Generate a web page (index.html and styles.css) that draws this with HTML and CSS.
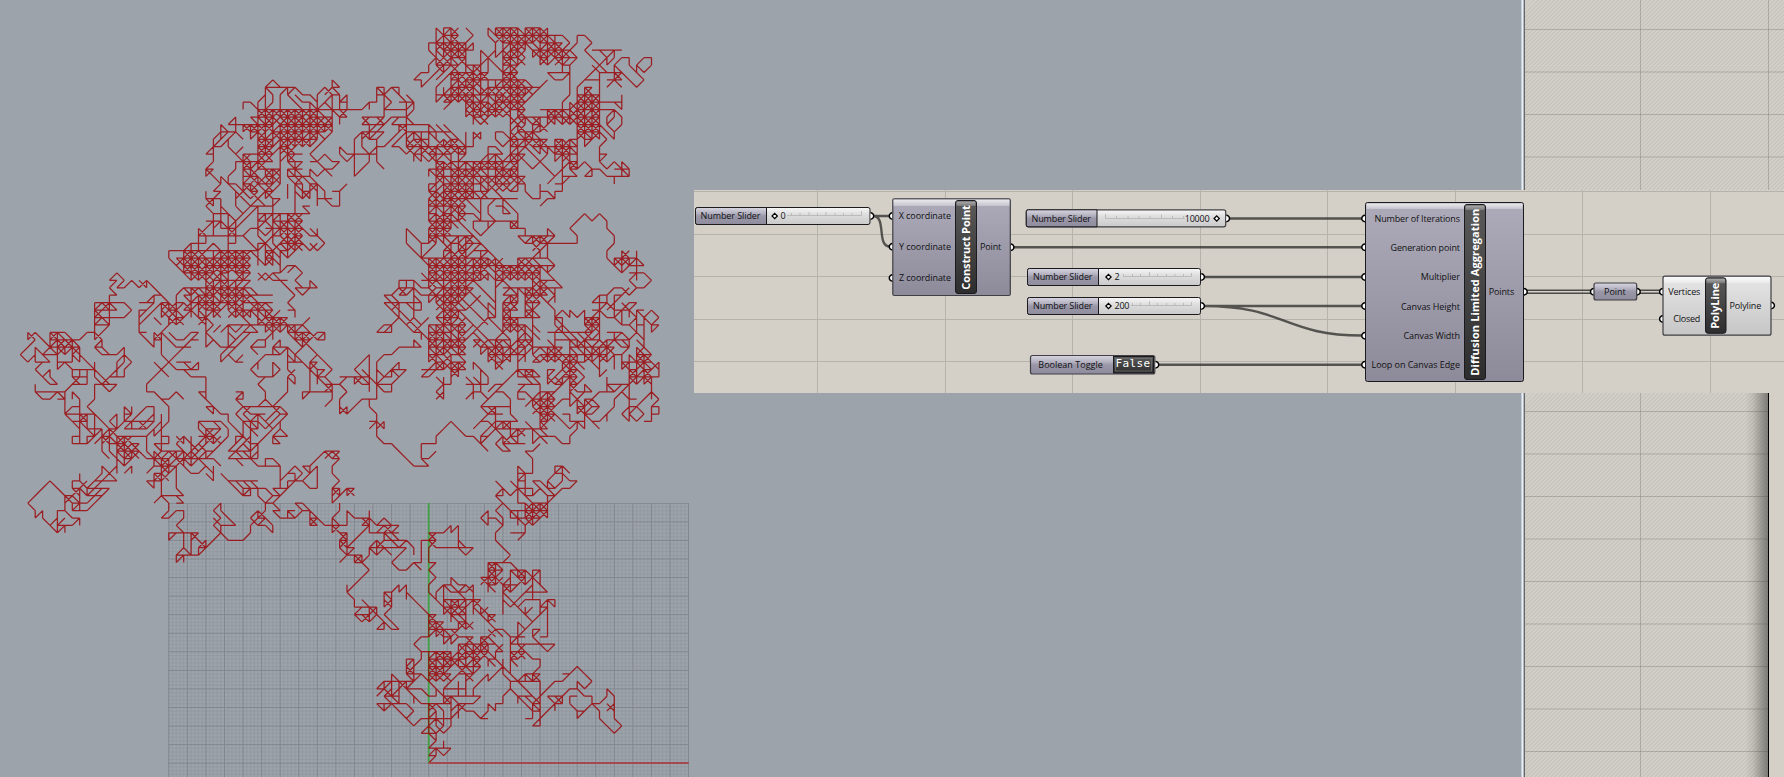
FILE: index.html
```html
<!DOCTYPE html>
<html lang="en">
<head>
<meta charset="utf-8">
<title>Diffusion Limited Aggregation</title>
<link rel="stylesheet" href="styles.css">
</head>
<body>
<main class="stage">
  <section class="viewport">
    <svg class="scene" width="700" height="777" viewBox="0 0 700 777">
      <defs>
        <clipPath id="plane"><rect x="168" y="503" width="521" height="274"/></clipPath>
      </defs>
      <g clip-path="url(#plane)">
        <path id="minor" class="grid-minor"/>
        <path id="major" class="grid-major"/>
      </g>
      <path class="axis-y" d="M428.7 503V763"/>
      <path id="walk" class="walk"/>
      <path class="axis-x" d="M428.7 763H688.7"/>
    </svg>
  </section>
  <div class="splitter"></div>
  <section class="side">
    <div class="side-top"></div>
    <div class="side-bottom"><div class="canvas-page"></div></div>
  </section>

  <svg class="definition" width="1090" height="203" viewBox="694 190 1090 203">
    <defs>
      <linearGradient id="purple" x1="0" y1="0" x2="0" y2="1"><stop offset="0" stop-color="#adabb9"/><stop offset="1" stop-color="#8d8a99"/></linearGradient>
      <linearGradient id="chip" x1="0" y1="0" x2="0" y2="1"><stop offset="0" stop-color="#d8d6e0"/><stop offset=".35" stop-color="#b3b1c0"/><stop offset=".5" stop-color="#9a97a8"/><stop offset="1" stop-color="#8f8c9d"/></linearGradient>
      <linearGradient id="track" x1="0" y1="0" x2="0" y2="1"><stop offset="0" stop-color="#f8f8f8"/><stop offset=".4" stop-color="#dedede"/><stop offset="1" stop-color="#cacaca"/></linearGradient>
      <linearGradient id="light" x1="0" y1="0" x2="0" y2="1"><stop offset="0" stop-color="#e6e6e6"/><stop offset="1" stop-color="#c6c6c6"/></linearGradient>
      <linearGradient id="dark" x1="0" y1="0" x2="0" y2="1"><stop offset="0" stop-color="#5a5a5a"/><stop offset="1" stop-color="#2d2d2d"/></linearGradient>
      <linearGradient id="gloss" x1="0" y1="0" x2="0" y2="1"><stop offset="0" stop-color="#fff" stop-opacity=".75"/><stop offset="1" stop-color="#fff" stop-opacity=".3"/></linearGradient>
      <g id="knob"><path d="M0-2.6L2.6 0 0 2.6-2.6 0Z"/></g>
      <g id="out"><path d="M0-3.2A3.2 3.2 0 0 1 0 3.2"/></g>
      <g id="in"><path d="M0-3.2A3.2 3.2 0 0 0 0 3.2"/></g>
    </defs>
    <rect class="sheet" x="694" y="190" width="1090" height="203"/>
    <path class="sheet-grid" d="M817.5 190V393M945.5 190V393M1072.5 190V393M1200.5 190V393M1327.5 190V393M1455.5 190V393M1582.5 190V393M1710.5 190V393M694 191.5H1784M694 234.5H1784M694 276.5H1784M694 319.5H1784M694 361.5H1784"/>

    <path class="wire" d="M873 216H890M873 216C887 216 876 246.500 890 246.500M1014 247.200H1362M1229 218.500H1362M1204 277H1362M1204 306H1362M1204 306C1285 306 1284 335.500 1362 335.500M1158 364.700H1362"/>
    <path class="wire-list" d="M1527 290.300H1591M1527 293.200H1591M1640 290.300H1660M1640 293.200H1660"/>

    <!-- Number Slider: 0 -->
    <g>
      <rect class="edge" x="695.500" y="207.500" width="174.500" height="17" rx="2" fill="url(#track)"/>
      <path class="edge" d="M766.500 207.500H697.500a2 2 0 0 0-2 2V222.500a2 2 0 0 0 2 2H766.500Z" fill="url(#chip)"/>
      <path class="ticks" d="M787 215.500H861.500V211M791.500 215.500v-2.500M800 215.500v-2.500M809 215.500v-3.500M817.500 215.500v-2.500M826 215.500v-3.500M835 215.500v-2.500M843.500 215.500v-2.500M852 215.500v-2.500"/>
      <text class="label" x="700.500" y="219" textLength="60">Number Slider</text>
      <use href="#knob" class="knob" x="774.700" y="216"/>
      <text class="label" x="780.500" y="219">0</text>
      <use href="#out" class="grip" x="870.500" y="216"/>
    </g>

    <!-- Construct Point -->
    <g>
      <use href="#in" class="grip" x="892.500" y="216"/><use href="#in" class="grip" x="892.500" y="246.700"/><use href="#in" class="grip" x="892.500" y="278"/>
      <use href="#out" class="grip" x="1010.700" y="247.200"/>
      <rect class="edge soft" x="892.800" y="198.800" width="117.500" height="96.700" rx="1.500" fill="url(#purple)"/>
      <rect x="893.500" y="199.500" width="116" height="6.500" fill="url(#gloss)"/>
      <rect class="edge" x="955.500" y="200.500" width="21" height="93" rx="2.500" fill="url(#dark)"/>
      <rect x="956.500" y="201.500" width="19" height="4.500" rx="1" fill="url(#gloss)" opacity=".65"/>
      <text class="title" transform="translate(969.800 289.700) rotate(-90)" textLength="84.500">Construct Point</text>
      <text class="label" x="898.700" y="219" textLength="52.300">X coordinate</text>
      <text class="label" x="899" y="250" textLength="52">Y coordinate</text>
      <text class="label" x="899" y="281.300" textLength="52">Z coordinate</text>
      <text class="label" x="980" y="250.200" textLength="21.300">Point</text>
    </g>

    <!-- Number Slider: 10000 -->
    <g>
      <rect class="edge soft" x="1026.300" y="209.800" width="199.400" height="17" rx="2" fill="url(#track)"/>
      <path class="edge" d="M1097 209.800H1028.300a2 2 0 0 0-2 2V224.800a2 2 0 0 0 2 2H1097Z" fill="url(#chip)"/>
      <path class="ticks" d="M1105.500 214V218.500H1185M1116.500 218.500v-2.500M1128 218.500v-2.500M1139 218.500v-2.500M1150 218.500v-2.500M1161.500 218.500v-4M1172.500 218.500v-2.500M1183.500 218.500v-2.500"/>
      <text class="label" x="1031.500" y="221.500" textLength="59.500">Number Slider</text>
      <text class="label" x="1184.700" y="221.500" textLength="25">10000</text>
      <use href="#knob" class="knob" x="1216.700" y="218.500"/>
      <use href="#out" class="grip" x="1226.300" y="218.500"/>
    </g>

    <!-- Number Slider: 2 -->
    <g>
      <rect class="edge" x="1027.500" y="268.500" width="173" height="17" rx="2" fill="url(#track)"/>
      <path class="edge" d="M1098.500 268.500H1029.500a2 2 0 0 0-2 2V283.500a2 2 0 0 0 2 2H1098.500Z" fill="url(#chip)"/>
      <path class="ticks" d="M1123 276.500H1191.500V273M1123.500 276.500v-2.500M1132.500 276.500v-2.500M1140.500 276.500v-2.500M1149.500 276.500v-4.500M1157.500 276.500v-2.500M1166.500 276.500v-2.500M1175 276.500v-2.500M1183.500 276.500v-2.500"/>
      <text class="label" x="1033" y="280.300" textLength="59.500">Number Slider</text>
      <use href="#knob" class="knob" x="1108.500" y="277"/>
      <text class="label" x="1114.500" y="280.300">2</text>
      <use href="#out" class="grip" x="1201.200" y="277"/>
    </g>

    <!-- Number Slider: 200 -->
    <g>
      <rect class="edge" x="1027.500" y="297.500" width="173" height="17" rx="2" fill="url(#track)"/>
      <path class="edge" d="M1098.500 297.500H1029.500a2 2 0 0 0-2 2V312.500a2 2 0 0 0 2 2H1098.500Z" fill="url(#chip)"/>
      <path class="ticks" d="M1131 305.500H1191.500V302M1132.500 305.500v-2.500M1140.500 305.500v-2.500M1149.500 305.500v-4.500M1157.500 305.500v-2.500M1166.500 305.500v-2.500M1175 305.500v-2.500M1183.500 305.500v-2.500"/>
      <text class="label" x="1033" y="309.300" textLength="59.500">Number Slider</text>
      <use href="#knob" class="knob" x="1108.500" y="306"/>
      <text class="label" x="1114.500" y="309.300" textLength="15">200</text>
      <use href="#out" class="grip" x="1201.200" y="306"/>
    </g>

    <!-- Boolean Toggle -->
    <g>
      <rect class="edge soft" x="1030.500" y="355.500" width="124.300" height="18.500" rx="2" fill="url(#chip)"/>
      <rect class="edge" x="1113.500" y="356.500" width="40" height="16.500" fill="url(#dark)"/>
      <rect x="1115.500" y="358.500" width="36" height="12.500" fill="none" stroke="#777" stroke-width=".7"/>
      <text class="label" x="1038.300" y="367.700" textLength="64.500">Boolean Toggle</text>
      <text class="mono" x="1115.500" y="366.500" textLength="34.500">False</text>
      <use href="#out" class="grip" x="1155.500" y="364.700"/>
    </g>

    <!-- Diffusion Limited Aggregation -->
    <g>
      <use href="#in" class="grip" x="1365" y="218.500"/><use href="#in" class="grip" x="1365" y="247.200"/><use href="#in" class="grip" x="1365" y="277"/><use href="#in" class="grip" x="1365" y="306"/><use href="#in" class="grip" x="1365" y="335.700"/><use href="#in" class="grip" x="1365" y="364.700"/>
      <rect class="edge" x="1365.500" y="202.500" width="158" height="179" rx="2" fill="url(#purple)"/>
      <rect x="1366.500" y="203.500" width="156" height="5.500" fill="url(#gloss)"/>
      <rect class="edge" x="1464.500" y="204.500" width="21" height="175" rx="2.500" fill="url(#dark)"/>
      <rect x="1465.500" y="205.500" width="19" height="4.500" rx="1" fill="url(#gloss)" opacity=".65"/>
      <text class="title" transform="translate(1479 375.700) rotate(-90)" textLength="167">Diffusion Limited Aggregation</text>
      <text class="label" x="1374.500" y="221.500" textLength="85.500">Number of Iterations</text>
      <text class="label" x="1390.500" y="250.500" textLength="69.500">Generation point</text>
      <text class="label" x="1420.700" y="280.200" textLength="39.300">Multiplier</text>
      <text class="label" x="1401" y="309.500" textLength="59">Canvas Height</text>
      <text class="label" x="1403.500" y="338.800" textLength="56.500">Canvas Width</text>
      <text class="label" x="1371.500" y="368" textLength="88.500">Loop on Canvas Edge</text>
      <text class="label" x="1488.700" y="295" textLength="25.500">Points</text>
      <use href="#out" class="grip" x="1524" y="291.700"/>
    </g>

    <!-- Point -->
    <g>
      <use href="#in" class="grip" x="1593.700" y="291.700"/><use href="#out" class="grip" x="1637" y="291.700"/>
      <rect class="edge soft" x="1594" y="283" width="42.700" height="17" rx="2" fill="url(#chip)"/>
      <text class="label" x="1604" y="294.500" textLength="21.700">Point</text>
    </g>

    <!-- PolyLine -->
    <g>
      <use href="#in" class="grip" x="1662.800" y="291.700"/><use href="#in" class="grip" x="1662.800" y="319"/><use href="#out" class="grip" x="1771.200" y="305.500"/>
      <rect class="edge soft" x="1663" y="276.200" width="108" height="59" rx="2" fill="url(#light)"/>
      <rect x="1664" y="277" width="106" height="6" fill="url(#gloss)"/>
      <rect class="edge" x="1705.500" y="277.800" width="20.500" height="55.500" rx="2.500" fill="url(#dark)"/>
      <rect x="1706.500" y="278.800" width="18.500" height="4.500" rx="1" fill="url(#gloss)" opacity=".65"/>
      <text class="title" transform="translate(1719.300 328.700) rotate(-90)" textLength="46">PolyLine</text>
      <text class="label" x="1668.300" y="294.500" textLength="32">Vertices</text>
      <text class="label" x="1673.300" y="322.300" textLength="27">Closed</text>
      <text class="label" x="1729.500" y="308.800" textLength="31.800">Polyline</text>
    </g>
  </svg>
</main>
<script src="aggregate.js"></script>
</body>
</html>
```

FILE: styles.css
```css
* { box-sizing: border-box; }
body { margin: 0; overflow: hidden; }

.stage {
  position: relative;
  display: flex;
  width: 1784px;
  height: 777px;
  background: #9da3aa;
}
.viewport { width: 1521px; background: #9da3aa; }
.scene { display: block; }
.splitter {
  width: 4px;
  background: linear-gradient(90deg, #c2ccd8 0 1px, #eef1f4 1px 2px, #b4bac2 2px 3px, #68686c 3px);
}
.side { flex: 1; display: flex; flex-direction: column; background: #d4d0c8; }
.side-top {
  height: 190px;
  background:
    linear-gradient(90deg, rgba(110, 108, 100, .35) 1px, transparent 1px) 115px 0 / 128px 100%,
    linear-gradient(rgba(110, 108, 100, .35) 1px, transparent 1px) 0 29px / 100% 42.5px,
    repeating-linear-gradient(135deg, #c9c6be 0 1.41px, #d2cfc8 1.41px 2.83px);
}
.side-bottom { height: 384px; margin-top: 203px; }
.canvas-page {
  width: 244px;
  height: 384px;
  border-right: 1px solid #000;
  background:
    linear-gradient(90deg, transparent 220px, rgba(70, 70, 65, .12) 228px, rgba(60, 60, 58, .56) 243px),
    linear-gradient(90deg, rgba(110, 108, 100, .35) 1px, transparent 1px) 115px 0 / 128px 100%,
    linear-gradient(rgba(110, 108, 100, .35) 1px, transparent 1px) 0 18px / 100% 42.5px,
    repeating-linear-gradient(135deg, #c9c6be 0 1.41px, #d2cfc8 1.41px 2.83px);
}

.grid-minor { fill: none; stroke: #92989f; stroke-width: .8; }
.grid-major { fill: none; stroke: #82868f; stroke-width: 1; }
.axis-x { stroke: #a6494e; stroke-width: 1.8; }
.axis-y { stroke: #43a047; stroke-width: 1.9; }
.walk { fill: none; stroke: #9a080c; stroke-width: 1.25; stroke-opacity: .86; }

.definition { position: absolute; left: 694px; top: 190px; }
.sheet { fill: #d4d0c8; }
.sheet-grid { stroke: #b6b3ab; stroke-width: 1; }
.wire { fill: none; stroke: #2d2c2a; stroke-opacity: .76; stroke-width: 2.4; }
.wire-list { fill: none; stroke: #4b4a46; stroke-width: 1.4; }
.edge { stroke: #1b1b1f; stroke-width: 1; }
.edge.soft { stroke: #3f3f44; stroke-width: 1.2; }
.ticks { fill: none; stroke: #b2b2b2; stroke-width: .8; }
.knob { fill: #fff; stroke: #000; stroke-width: 1.3; }
.grip { fill: #fff; stroke: #000; stroke-width: 1.5; }
.label { font: 9px "Open Sans", "Noto Sans", sans-serif; fill: #111114; }
.title { font: bold 11px "Open Sans", "Noto Sans", sans-serif; fill: #fff; }
.mono { font: 11px "DejaVu Sans Mono", monospace; fill: #fff; }
```

FILE: aggregate.js
```js
const STEP = 7.425, OX = 428.7, OY = 763;
const NS = id => document.getElementById(id);

// Construction plane grid
let minor = '', major = '';
for (let k = 0; k <= 140; k++) {
  const d = `M${(168.8 + k * 3.7125).toFixed(2)} 503V777M168 ${(503.3 + k * 3.7125).toFixed(2)}H689`;
  if (k % 5) minor += d; else major += d;
}
NS('minor').setAttribute('d', minor);
NS('major').setAttribute('d', major);

// Each tile: origin, walks (x,y pairs) and filled clusters (density: outline), three units per pixel.
const tiles = [
{ o: [0, 0], walks: `
728,328 728,306 750,306 773,328 773,306 796,284 796,262 818,240 840,262
796,262 885,262 907,284 930,284 952,306|796,262 796,328|796,262 818,284 818,306 796,328 1042,328
863,262 863,284 930,350|885,262 863,284|885,284 907,306 930,306|840,328 840,284 863,262|773,328 773,350 818,306
952,306 952,284 975,262 997,284 1019,284 1019,328 1042,350 1019,350 1019,373|975,262 952,328|997,240 997,262 975,284|997,240 1019,262 997,262 1019,284|930,350 930,306 975,350
952,328 975,306 997,328 1019,350 1042,328 1042,284 1019,306|997,284 997,395|975,373 997,373|975,306 997,284
750,350 818,350 818,395|750,350 796,395|685,373 707,350 707,373 685,373 750,373|707,373 707,395 730,417
662,373 662,417 618,462 640,462 640,417 662,395 707,395|662,373 685,395 662,417|640,440 662,440 707,395|685,417 685,440 730,484 707,484|707,462 730,440|640,462 640,484 618,506 618,528 640,506 618,506 662,550
662,528 662,550 640,573 662,573 640,595 618,617 640,640|662,528 730,595|618,573 618,595 640,617 640,595 618,595|640,595 662,595 662,640|662,617 707,662 730,640 707,617 707,573|685,550 707,550 730,573
685,550 685,528 707,506 707,484 730,484 730,528|618,662 662,662|640,640 640,662 595,707 595,685 618,707|640,640 685,640 685,750|595,707 730,707 750,685 773,685|595,707 595,750|618,707 618,730 573,730
662,640 662,685 707,685|640,662 640,707|640,685 662,662 707,730|685,685 773,595|707,662 707,730 685,730|685,707 707,685|707,685 773,617 773,662
730,707 773,750|506,750 506,773 550,817|506,750 573,750 573,730 550,750|528,773 573,773
1019,440 1019,462 1050,484|1019,440 1050,462|930,462 952,484 975,462 997,484 1019,484 997,506 975,506 952,528|930,484 952,484 997,528|930,462 997,395
885,528 930,528 930,506 952,528|930,528 975,573 975,595 1019,617 1019,573 997,573|1019,573 1042,550|952,595 997,595|997,617 1019,617|952,550 952,617
907,617 930,640 907,640|907,617 930,617|930,685 952,707 952,685|952,707 975,730 952,750 930,730|907,730 930,750 952,730|907,685 952,707
840,750 840,817 863,795 885,795 907,817 885,840|796,750 840,817|863,817 885,795|840,750 863,773 907,728|840,484 840,550 796,595|863,484 885,506|773,595 796,617|730,595 773,617 818,617 840,595 818,595 818,640
750,750 796,795|773,750 773,795|818,750 818,795|796,595 840,550|885,550 885,640|662,750 640,730 618,750`,
clusters: `.6:796,328 975,328 997,395 930,462 907,440 840,462 750,417 730,373
.5:730,462 818,440 840,550 796,600 707,605 735,540|.45:863,540 930,530 952,573 952,600 863,600
.45:773,640 907,640 907,750 796,795 775,730|.6:550,750 773,750 750,817 550,840
.45:840,440 907,462 907,528 870,528|.6:840,328 930,350 907,440 840,462|.5:863,640 907,640 907,750 840,750` },

{ o: [340, 0], walks: `
289,83 289,128 311,106 289,83|378,128 266,128 266,150 289,173|289,128 289,173|378,83 400,106 378,128 378,217|378,150 400,128 400,150 378,150
445,83 467,106 467,83 512,128|445,83 445,106 467,128 467,173 490,128|422,150 422,217|422,150 445,173 445,217|422,195 467,150|445,173 490,217|289,173 266,195 266,217 244,217 222,239 244,239 244,262 289,217
289,284 289,262 333,217|289,239 311,217|622,83 622,106 645,128 645,106 667,106 690,128 667,150|690,150 712,173 690,195 690,284 667,306 667,328|690,173 712,173
690,150 712,128 712,106 735,106 757,128 735,150 802,217|757,150 824,150 802,173 757,150|780,150 802,195 824,150|757,217 845,150|757,195 780,217 845,217
824,195 845,173 868,173 868,195 912,239 890,262 824,195|890,217 890,195 912,173 935,173 935,195 912,217 890,195|802,262 845,217 824,195 824,239 845,262|802,239 845,239 780,217
780,217 780,417|757,217 735,239 712,262 712,306|735,239 780,239|780,306 845,306 845,328 824,306|845,284 845,328|824,328 845,350 845,373 824,395 802,373 824,350 824,328 802,350 802,373|824,395 824,417 780,373|780,328 824,328
780,395 802,417 780,440 780,462 802,462 780,484 802,506 824,484 868,528 868,506 845,484 845,528|780,462 780,484|824,506 868,506|824,528 824,550
690,506 712,506 735,484 757,506 757,528 735,528 757,506 780,506 802,528 868,528|667,528 712,528 690,506|712,373 712,506|667,417 667,573 645,573 645,595 622,573 600,573 600,595 578,595 556,573 556,550 534,528
600,550 600,595|600,617 622,595 645,595|622,550 690,484|645,550 667,550 690,528|534,462 556,484 578,506 622,462|578,462 645,528|556,239 578,262 600,262 622,239|600,262 556,306|622,217 645,239 667,239 690,217 622,217
110,262 110,306 89,306 67,328 0,328|110,262 133,284 110,284|133,262 133,350|110,262 133,262|133,284 155,262 178,262 178,284 200,306 200,395|133,328 200,328|133,284 155,306 133,328|200,284 222,306 222,328 200,350 222,373|178,306 222,306 200,328|155,262 178,284|89,306 89,328
67,350 133,350 67,417|67,350 89,373 89,395 110,395|67,373 110,350 133,373 89,350|67,373 133,373|67,395 133,395 110,417 89,417 89,395|89,417 155,350 200,350|44,417 67,395 67,440 89,484 44,528 44,417|67,395 89,417
133,395 110,440 133,440 200,373|89,462 110,440 110,484 133,506|0,440 22,462 110,462|0,462 22,484 44,462|22,284 22,306|0,306 22,306|0,350 22,350
155,373 200,373 155,417|155,440 200,395 155,373 200,350|155,440 178,440 200,462|178,373 178,395|200,373 266,373 311,395|311,373 378,440|200,395 333,395|266,373 266,395|289,373 356,440
378,395 378,462|400,395 400,440 356,440|400,395 422,417 422,395 400,417|378,484 422,484 445,462 445,440 467,440 490,462|467,395 467,417 490,440 512,417 490,395 467,395
378,595 422,640 422,662 400,640 378,640|422,595 422,662|400,662 534,662 534,640 445,550|467,595 445,617 445,640 467,662 422,707 400,685 400,662|445,662 445,685|467,617 490,617 512,640 490,640 490,595|422,662 400,662|378,595 534,595
534,662 534,685 556,685 556,707 534,707 578,730|512,662 512,685 534,685 512,662|512,685 534,662|512,506 534,528 556,528 534,550 512,528|534,484 534,573 512,573 556,550
378,685 467,773 490,795|356,662 512,817|467,795 490,773|445,750 422,750|400,707 356,707|556,707 645,707 622,685 622,707|556,730 578,707 578,730 600,750 622,730|600,707 622,750|645,707 622,750 622,773 600,773 600,750 556,795|578,750 622,730
622,730 712,730 712,707 690,685 735,640 757,662 780,640 802,662 802,685 824,707 824,730 802,750 802,773 845,817 868,795 912,795|824,773 824,795 845,817 845,795 890,773|824,773 868,773|845,750 868,773 868,795|824,795 868,750|845,750 845,773|890,750 890,840|890,773 912,795|845,773 868,795
200,685 200,730 266,795|200,685 244,730 266,730|244,730 244,773 266,773 266,840|244,773 289,730|868,817 912,817 935,840|600,795 645,795 622,817 622,795|600,817 600,840|556,795 578,795|178,840 222,840`,
clusters: `.6:311,83 356,83 356,128 378,150 378,173 340,217 289,217 289,173|.45:289,128 378,128 378,195 311,173
.62:467,83 578,83 600,106 550,173 534,239 490,239 490,173|.5:578,83 622,83 690,173 690,217 622,195 578,173|.55:600,106 645,106 690,173 600,173
.62:340,217 400,195 467,239 534,217 578,284 534,328 490,350 422,373 378,350 400,328 340,284|.45:289,284 340,262 378,306 311,328
.6:512,262 556,262 556,328 578,373 556,395 512,395|.5:578,350 645,328 735,306 735,395 712,395 690,373 645,373 600,417 578,395
.65:712,306 735,262 780,284 780,417 735,440 712,417|.6:512,395 600,395 600,462 512,484|.45:445,462 534,462 512,550 445,550
.4:600,417 667,440 667,462 600,462|.6:645,417 712,417 712,506 667,506 645,484|.5:200,395 289,395 378,440 378,484 311,506 244,484 200,462
.65:356,484 445,484 445,595 378,595 356,550|.45:311,484 400,484 378,595 289,550 266,506|.5:445,506 534,506 512,573 445,573
.65:266,550 378,595 378,662 333,685 311,730 266,730|.5:289,528 356,528 356,595 289,595|.45:311,707 378,707 445,773 445,840 311,840|.65:266,795 378,795 378,840 266,840|.5:445,795 600,795 600,840 445,840|.5:556,707 622,707 600,750` },

{ o: [0, 260], walks: `
328,61 350,39 372,61 350,83 372,83 395,61 417,83 440,61 440,83 417,61|440,61 528,150|328,61 350,61 328,83 350,106 328,106 328,194 283,239 283,128|283,128 372,128 395,150 372,172 283,172 328,128 350,150|283,150 350,150|306,128 328,150|283,194 306,172 328,194 283,194 283,217
283,217 261,217 239,239|283,217 306,239 306,261 283,261 306,283 350,283 372,261 372,306 350,350|306,239 283,261|328,283 306,261|350,306 372,283 395,306 372,328|350,306 350,328 306,373|372,350 328,350 372,306|350,350 372,350 372,328
83,217 83,239 106,217 172,283|83,217 106,239|83,306 61,283 106,239|83,306 106,283|106,261 106,306 150,306 128,283|106,261 128,283 172,283|150,217 194,217 239,261 239,306 217,283|150,239 239,239|150,217 150,239 172,217 172,328|128,283 172,261
106,328 128,306|106,328 150,373 172,373 150,350 150,328|128,350 150,328|194,306 172,328|172,306 217,306 217,283|194,306 239,328|217,328 283,328|217,328 217,350 239,373 261,373 261,328|217,350 261,350|239,328 239,350 172,395 106,395 106,373|106,395 128,417 150,417 172,395 194,417|172,417 194,417|194,395 217,373 239,373
239,283 283,328|283,306 283,350 328,395 350,373 283,373 283,417 261,440 372,550|283,328 328,373 350,373|194,395 194,462 239,462 239,484 217,484|194,462 239,506|217,395 239,417 239,462|217,395 217,417|194,462 239,440|239,484 239,550 217,550 217,528 239,528|217,550 261,550|239,484 283,462 283,506|239,462 283,462
328,484 350,462 350,506 328,484|372,440 372,484 395,462 372,440|395,440 395,462 372,462|372,506 417,462|350,506 395,484|395,484 462,440 462,484 440,506 417,484|417,506 462,462|395,506 395,484 462,484|372,506 440,506|395,528 440,528|440,550 440,528 484,484|440,573 440,550|462,506 462,528 506,462 506,440 462,395 440,395 440,373 595,217
484,417 506,417 528,395 550,417|462,306 506,350|528,306 550,306 572,328 595,306 595,328 550,328|506,306 528,328 550,328 572,350 618,350 618,417 662,462 685,462 685,484 730,528|506,306 484,283 484,217|595,395 618,417|595,395 618,395|618,440 640,462 640,440 618,440|550,306 572,306
417,150 417,217 462,261 462,217 484,239 462,239|417,150 440,150 462,106 462,128 417,128|417,217 440,217|417,172 462,128|417,194 484,128|484,217 528,172|484,217 550,261 572,261|506,217 528,239 550,239 595,217|572,239 595,239|462,172 484,194|484,217 462,239|440,128 484,106 506,128|528,106 550,83 595,83|528,128 528,106
484,462 484,573|484,528 506,528 506,550 462,550|462,550 506,573|440,573 462,595|528,528 550,550 550,528 528,550|595,484 662,484 685,506 685,528 662,550 640,573|595,484 618,506 662,506|595,484 595,506 640,550|595,528 640,528|595,550 618,528 595,506|640,484 662,506
618,617 640,662 640,617|662,617 640,595|618,640 640,662|550,617 572,640 595,640 618,617|306,617 350,662 283,662 306,640 306,617|283,685 350,617|261,685 283,662|350,573 350,640|372,640 395,617 395,640|328,573 350,595|306,506 306,573 328,595|417,573 440,595 506,595|528,595 640,595
150,662 83,728 106,750 106,773 128,750 128,773 172,817 194,795 172,795 172,750 194,750|150,662 217,728|194,707 194,750 217,773 239,773 239,795|194,795 194,817|172,795 194,773|194,795 217,795 239,773|172,773 150,795|172,817 172,795
217,662 217,685 239,706|239,640 239,662 217,662|239,662 261,685 328,685 261,750 217,750 217,728|217,706 261,662|194,728 239,684|283,706 239,728|217,728 261,728 306,685|217,750 239,728 194,706|239,684 261,706 283,684|261,684 261,706 306,706|217,684 239,684 239,750
440,662 484,662|440,640 484,617|440,662 462,684|484,595 484,706 462,728|462,662 484,640 506,662|462,684 462,662|484,706 506,728 506,750 484,773 506,773 528,750 550,750 550,773 528,795 550,817 550,861|484,706 550,706 528,684 528,617|528,706 550,728 528,728
506,817 595,817|506,839 528,817|506,817 506,839|550,861 572,884 572,817|550,861 528,884 528,906 550,884 550,906|528,884 595,884 618,861|572,817 618,861 662,817 685,839 728,839 750,817 750,795 795,728|595,817 572,839|595,884 595,861 618,839 618,861|550,839 550,817|595,861 618,861
640,750 662,728 662,750 706,795 662,795 662,817|640,750 662,773 640,795 662,817|640,773 662,795|662,640 728,706 750,684 728,662 773,662|685,662 728,662|706,662 728,706|728,684 773,684 750,662|773,684 795,684 817,706 795,728 773,706 773,684|728,706 750,706 750,684|795,728 839,706 817,684 839,684
839,684 839,617|773,617 839,617 817,595 795,595 795,617|773,617 728,573|817,728 863,684 885,640 863,640 885,617 907,640 885,662 863,662 863,684 839,684|863,640 839,684|885,662 907,662 930,684 952,684 952,617 907,662|930,640 907,617 930,617 975,573 1019,573 997,595 975,573|930,640 930,617|997,573 1019,595 997,617 997,640 1019,662 997,684 1019,706 997,728|975,595 997,573|975,573 1019,595
817,728 839,750|795,728 817,728|817,750 839,773 885,773 907,750 885,728 907,728|863,773 863,750 885,750|863,750 885,773|907,750 930,750 952,773 930,795|907,728 952,773 975,795 997,795|930,795 952,795 930,773 952,773|930,750 930,795|817,750 839,750
750,773 773,750 795,773 773,795|795,795 817,817 817,795 795,773|773,750 773,773 750,795|750,773 795,795|773,773 795,773|997,795 997,773 1019,750 1019,728|997,795 1042,839|997,773 1019,795|997,684 997,728
839,0 839,39 863,17 885,17 907,39 885,61 907,83 930,83|885,83 907,106 930,61 952,83 885,83|863,39 885,17|773,39 795,61 839,39|773,61 795,39 817,61|817,39 885,106 863,128 885,150 885,172|863,150 885,150|795,39 863,72|750,83 773,106 817,106|839,17 817,0
863,194 907,239 952,284|930,172 885,217|907,194 952,239|952,217 975,217 952,239 975,239 975,217|930,239 952,217|863,261 952,350 1000,395|930,306 952,284 997,328 975,350|952,306 930,328 930,395 907,395 907,417 930,395 997,395|863,261 863,328 885,350 885,373 863,350|863,373 863,395 817,440|885,328 863,373|907,261 885,283 907,306 863,306|863,283 885,306 885,283
840,261 863,261|840,239 817,283 795,283|750,261 773,261 795,261 795,239|773,239 750,261|773,239 795,239 817,217|818,261 840,283 863,261|773,283 750,261|750,328 795,283 840,283|773,306 773,328|750,328 773,350 817,350 839,328 817,306 817,350|795,350 773,373 795,395 795,417 817,440|817,261 840,261 840,239|795,417 773,440
1042,350 1019,373 997,373|1019,373 1042,395 1019,417 1019,462 1042,440|1042,462 1019,440|975,440 997,417 997,373 952,350|618,194 618,261 640,239 618,217|618,217 662,261 706,261|662,194 640,217|640,194 618,217|685,194 685,261 706,239 685,217|662,306 750,217 773,217 728,172|662,306 662,283 706,261|685,283 706,306 728,283|706,306 728,306|685,194 839,194|728,194 706,217 685,194|662,217 685,194|750,217 728,217|662,283 750,194|817,172 817,239
706,462 750,440 840,440 863,462 839,462 817,440|706,395 728,395 728,417 706,417 750,462|728,395 706,417|817,506 839,484 839,506 861,528 817,528 817,550 839,550 817,528 839,506|863,462 773,550|795,506 839,462|817,462 839,440|706,462 728,484 728,528|817,462 795,484 817,506
685,573 706,550 706,528 728,528 706,550|685,595 773,595 773,550|685,595 728,550|706,595 728,617|685,573 750,573|706,573 728,595|750,528 750,595|773,573 750,595`,
clusters: `.6:617,0 662,0 662,172 595,150 617,61|.45:528,0 617,0 617,61 550,39|.6:662,61 750,61 750,128 662,150|.5:662,0 750,0 750,83 662,61
.5:750,106 817,128 863,194 817,217 750,172 685,172 662,150|.45:550,83 640,83 640,194 550,172|.6:484,128 550,128 550,194 506,194 484,172
.5:150,217 239,239 239,283 172,283|.4:239,462 283,462 283,506 340,506 395,550 350,573 306,550 261,550
.6:350,528 395,528 417,573 395,617 350,617 340,560|.5:484,573 640,573 618,617 528,617 484,640 462,595|.35:484,550 618,528 618,573 484,573|.6:618,506 662,506 662,550 618,550
.4:728,440 773,440 817,484 773,528 728,506|.4:706,528 773,550 750,595|.6:885,194 930,217 930,261 907,283 863,217|.45:930,306 975,328 997,417 952,373|.45:462,640 528,617 506,662 484,684|.35:283,128 328,128 306,194|.5:1000,684 1065,684 1019,728|.5:1000,795 1050,839 1050,895 1020,860|.45:817,172 863,172 885,217 840,217` },

{ o: [340, 260], walks: `
178,61 222,61 244,83 266,83|178,61 178,83 133,106 155,106 178,128 244,128|133,106 244,239|200,61 200,83 178,106 200,106|178,83 200,106 222,61|133,128 178,128 155,150|133,128 222,217 244,217|178,128 178,172 155,194 110,217 133,194 155,194 155,217 110,217|133,217 155,194|222,61 222,172 244,194|200,194 222,172|222,106 244,128 244,150 222,150 200,128|244,39 266,61 244,61|222,194 266,239|222,217 244,194 266,172|178,83 222,83 266,106
222,239 222,261 178,261 155,283 133,283 110,306 110,328 133,350 178,306 178,328 200,328|222,239 244,261 222,261|89,284 44,328 89,395 89,284|22,350 67,350|67,328 133,395 155,395 155,373 200,328|22,350 0,373 22,395 0,417|44,373 89,350|44,350 89,373|110,306 110,417 67,417 22,462 22,440 0,462|110,373 178,328|110,373 155,373|133,350 155,350 155,328 178,350|0,350 22,350|44,350 44,373 67,350
89,417 89,440 110,462 110,528 133,550 155,550 222,617 266,617 244,595 266,595 289,573|89,506 110,484 133,506 133,484 110,506|89,484 110,484|244,595 244,550 289,550 289,528 333,484 378,528 400,528 445,573|422,550 422,528 445,528
244,350 289,306|244,328 289,328|244,350 266,350 311,328|289,350 311,373 311,417 289,395 311,373 333,373 333,350|289,417 311,395|311,373 311,350|378,350 400,373|378,373 422,373 422,395 400,395|400,373 400,417|378,417 400,395 422,395 445,417 534,328|422,328 422,373 445,373 445,350|400,350 422,373|445,395 467,373 490,373 534,328|400,328 400,306 445,350
422,440 490,395 512,417 512,462 534,484 490,484|422,440 512,440|445,462 512,440|467,440 467,484|400,506 445,462|422,440 445,462 490,462|422,484 445,484 490,528 467,550 490,573 512,573 490,550|467,506 578,506|422,528 490,484|490,528 490,550 556,550|445,440 490,462|422,550 467,506|534,506 534,550|556,484 578,506
600,550 556,573 578,595 578,640 534,640|534,617 534,728|534,617 556,640 534,662 556,662 556,640|622,528 645,528 667,550 690,550 690,528 712,506 712,484|578,528 578,550 622,528|600,528 622,550|645,617 667,617 690,640|667,617 667,662 645,684 622,662 667,617|645,617 645,640 667,640 712,662 690,684 667,684 600,728|622,662 622,684 645,684
467,662 490,684 467,706 490,728|490,684 512,706 534,684|512,662 534,684 556,684 556,662|534,684 600,728|534,684 534,662|556,706 578,706 578,684 556,684 556,706|578,662 600,662 645,706 622,706|578,706 600,684 622,706 622,773|578,662 622,706|622,728 645,706|534,684 578,728|534,728 556,728 578,750|467,706 490,706 490,684|490,728 467,750 490,773|490,728 512,750 512,773|512,750 534,750 534,773
422,773 445,750 445,795 422,773|445,773 467,773 490,795 467,817|490,773 490,795|667,150 690,172 690,150 712,172 735,150 735,194|667,150 645,194|645,172 667,172 667,217|622,217 645,217 645,306|645,217 757,217|645,239 690,239|645,172 712,239|645,217 667,194|645,194 712,261|622,239 667,284
757,128 780,106 802,106 802,128 780,150|757,128 802,128|802,150 868,83|802,106 845,83 868,106 890,83|868,61 890,39 912,39 935,61 912,83 890,83 868,61|824,128 845,106|824,106 845,106|780,106 780,217|824,106 824,172|845,150 868,128 890,128 868,150 868,172|845,128 890,172|802,128 824,150 868,150|824,172 868,194 890,150 912,150|824,172 845,150 845,194|780,150 802,172 824,172|890,128 868,128
890,150 912,172 935,150 957,172 935,194 912,172|935,194 957,194 935,217 935,194|912,172 912,239 890,217|890,194 912,194|890,172 890,217|912,239 912,261 935,284 912,306|957,306 957,350 935,350|935,306 957,328|935,350 935,417|912,306 935,328 957,306|935,395 957,417 935,440 957,440 957,462 935,462 935,484 912,484|935,440 935,462|890,239 912,261|868,194 890,217 845,239
868,373 868,484|845,462 890,440 935,395|845,395 824,417 824,440 802,462 802,484|757,484 780,484 802,462|845,395 868,417 890,417|845,462 868,484|890,440 912,462 890,484 868,462 890,440|845,462 868,440 890,440|802,350 802,395 780,395 757,417|802,373 868,373 845,395|802,395 824,395 845,373|802,373 824,395|780,350 802,328|735,373 757,395 735,395 735,373|757,440 780,440 757,462 735,462|757,417 780,440
735,462 757,484 780,506|735,440 735,506|712,484 735,506|690,484 735,484|645,462 690,506 712,484|667,462 690,462 690,484 712,484|757,306 780,350 802,328|780,306 780,328|712,328 735,350 690,395|645,395 667,373 645,350|622,350 645,328|690,417 667,417 622,462|534,373 600,373 600,395 578,417 556,395 534,395 534,417 556,417|556,440 600,395|534,395 556,373
378,172 400,194 378,217|378,239 445,172 467,194|400,106 467,172|422,106 378,150|378,128 445,194|445,128 445,172 467,172 467,0|445,128 467,150|400,194 467,261|400,217 490,306|490,217 467,239 490,239|445,172 512,239|400,61 467,128|378,39 422,61 422,0|534,172 534,306|512,83 534,128 512,150|600,172 534,172|578,128 578,261|622,39 667,83 622,83|645,61 622,61|600,61 645,106 622,128 645,150 645,172|645,83 645,128|490,150 490,217|534,194 578,239|600,217 578,194
622,0 645,17 622,39 600,17|622,17 645,17|807,0 845,39 890,0|824,0 845,17 868,0 868,17|845,0 845,39|868,17 890,17|890,0 890,39|890,0 912,17|534,328 534,350 600,350|534,328 578,373|556,328 600,373 600,417`,
clusters: `.75:266,0 378,0 400,61 378,128 266,128|.6:289,128 378,128 378,239 289,194|.68:266,194 378,194 378,261 289,284 266,261
.55:266,261 378,261 378,350 333,350 311,328 266,306|.55:378,0 467,0 445,39 378,61|.5:467,17 534,17 512,83 467,83|.45:534,0 600,0 622,39 556,39
.6:578,39 622,61 622,106 600,172 556,172 556,106|.4:490,83 556,83 556,128 490,128|.5:490,128 534,128 534,217 490,217
.28:378,239 534,239 534,306 445,306|.55:445,261 534,261 490,306 490,328 445,306|.25:534,172 600,217 600,350 534,350
.6:622,261 712,284 712,373 690,395 667,328 622,284|.55:690,239 757,172 780,172 757,261 802,306 690,328|.6:735,172 780,150 780,217 735,217
.32:757,217 890,217 912,306 845,328 780,306|.6:845,306 935,284 935,373 868,373|.4:690,395 735,395 757,440 735,484 690,440
.5:578,417 645,395 645,462 578,462|.6:600,440 645,440 622,528 600,528|.45:467,484 600,506 600,528 490,550|.5:534,750 600,728 622,750 578,795 534,795|.3:534,240 645,261 645,306 600,350|.28:622,328 690,350 645,417` },

{ o: [340, 490], walks: `
0,106 22,106 22,61 44,83 89,83 89,61|67,106 89,83 110,106|89,83 89,128 110,128 155,106|67,83 89,106 67,106|110,106 133,83 155,106 178,106 155,128|110,106 155,106 133,128 133,150|133,106 178,128|89,128 155,128 200,150|22,172 89,106|0,217 44,195 67,217 89,195|0,128 22,128 22,195 0,172|44,195 67,195 67,217 44,217 44,195|44,217 67,195|0,150 44,172 0,217|0,172 22,150
89,195 89,172 110,150 133,172 110,195 110,150|89,172 110,195|89,172 200,172|133,128 178,172 200,150 178,150|200,150 222,195|133,150 200,150|110,150 155,195|133,150 110,172|200,172 155,217 178,239 200,239 222,217 244,239|222,217 244,217 244,150 289,150
67,217 89,239 22,306 44,328 44,350 110,350|22,284 22,306|44,373 67,395 110,350|67,328 110,373 89,395 89,350|44,373 89,373|44,373 67,350|67,373 89,395|110,350 110,373 155,417 178,417 133,373 155,350 155,306 178,284 178,306 200,284 200,328|110,417 133,395 133,417 110,417|133,306 155,328 133,350 133,306 155,306|133,328 155,350|200,306 266,373
266,128 311,128 333,106 333,128 356,106 356,172 378,195 400,172 289,172 266,150|356,150 378,172|266,128 289,150 266,172|289,128 266,150|266,172 266,217 289,217 266,239 289,261 266,284 266,306 289,328|333,261 356,284 378,284 356,306|333,261 333,284 311,284 289,328|311,284 333,306 378,306 400,284 400,350|378,284 400,328|311,284 311,328|333,284 378,328
490,40 467,61 490,83|490,40 512,61 534,83|512,83 534,83|467,83 490,106 467,128 467,150 512,195 490,217|512,128 556,128 534,150|556,106 556,128|445,217 512,217 556,261|445,217 445,284|490,306 578,395 600,373|490,328 512,350 534,328|556,306 622,306 578,261|600,239 600,284|578,239 578,328|490,306 490,373|512,350 578,284|556,328 600,328 600,373|556,328 534,350|556,350 556,373 578,350|600,373 622,350 600,350 622,328 645,328 645,350 622,328|622,328 622,440|534,440 578,395
534,395 534,462|534,395 556,417|467,417 490,417 512,440 512,462|600,417 578,440 645,462 622,484 600,462|600,440 622,440|467,417 422,462|400,350 467,417|266,440 244,440 222,462 244,484 266,484|244,484 244,506 200,550|200,506 222,506 222,573|200,506 200,550 222,573|200,528 222,506|200,528 222,550 200,550|200,550 244,550 289,617
244,550 200,595|155,550 155,617|155,550 222,573|133,573 222,573|110,595 133,573 133,595 110,595|110,617 155,573|110,640 178,640 178,573|133,617 178,617|110,640 133,662 155,640 133,617|133,595 178,640|133,662 133,640|155,595 133,617|155,640 222,706 266,684|178,640 200,640 222,662 200,684|200,573 200,595 244,640 333,640|200,595 244,595 266,617 289,617|178,573 222,640|155,617 200,573
266,573 333,640|266,640 289,662 266,684|266,662 289,640|266,640 266,728|266,684 333,684 333,706 311,728 289,706|289,640 311,662 311,706|244,728 311,684|266,706 289,662|244,728 289,728 311,706 289,684|244,728 289,684 289,706|266,706 289,728|266,728 289,750 266,773|289,728 289,750|333,684 378,640
311,595 378,595|311,595 311,640 333,617 378,662 400,662 422,684 445,684|311,595 378,550|378,550 378,617 422,617 400,640 356,640|356,573 356,617|311,617 378,617|356,640 333,662|356,640 356,684|311,617 333,640|333,617 333,684|400,617 400,595 445,550 445,573 490,528 467,506|422,684 445,662 445,640 467,662 467,640 490,640 490,617 512,595|490,506 490,550
512,573 600,573 600,706 578,706 645,640|512,573 512,595 578,662 600,662|512,595 534,617 578,617 600,640|534,617 534,640|556,684 578,684 578,640|556,617 600,662|534,573 600,640 578,640 645,573 667,573 712,528 757,573 735,595 712,573 712,595 690,595|667,550 690,550|578,640 600,617
622,617 667,617 667,640 645,640 622,617|645,617 667,640|645,640 667,617|645,640 645,662|622,662 690,595|667,617 712,595 735,617 757,617 757,640 780,662 780,684 824,728 845,706 824,684 824,617 802,595 802,617 780,640 757,640|690,617 690,640 712,662 712,684 757,640|712,662 735,662|802,640 824,662|824,640 802,662|690,617 712,617
266,817 289,795 266,795|266,773 333,773 311,795|289,773 289,795|266,795 289,773 311,795|311,750 311,773|266,817 289,817|556,484 578,506 600,506 600,528 578,550|534,462 622,462|490,528 534,573 556,550|512,528 512,550|512,573 490,550`,
clusters: `.55:289,328 356,328 356,395 311,373|.65:266,373 311,395 311,440 266,440|.55:356,328 400,328 467,373 467,395 422,373 378,395 356,350|.5:311,350 378,373 400,417 356,417|.6:445,217 490,217 490,284 445,306 422,284
.5:490,261 534,239 600,239 578,284 534,284 534,306 490,306|.7:266,484 333,484 333,573 266,573|.6:356,462 400,462 422,484 422,550 400,573 378,573 356,528|.45:311,417 400,440 378,484 311,462
.35:422,440 490,417 490,506 445,528 422,506|.4:512,440 556,440 556,484 534,528 512,528|.5:578,417 600,440 578,462|.6:556,550 600,550 600,573 556,573|.5:333,484 356,484 356,550 333,528|.5:534,83 600,40 622,61 590,106 534,106` }
];

// Repeatable noise so the cluster pattern is stable between loads
let seed = 90210;
const rand = () => ((seed = (seed * 1664525 + 1013904223) >>> 0) / 4294967296);

const edges = new Set();
const key = (a, b, c, d) => (a < c || (a === c && b <= d)) ? `${a},${b},${c},${d}` : `${c},${d},${a},${b}`;
const inside = (x, y, poly) => {
  let hit = false;
  for (let i = 0, j = poly.length - 1; i < poly.length; j = i++) {
    const [xi, yi] = poly[i], [xj, yj] = poly[j];
    if ((yi > y) !== (yj > y) && x < (xj - xi) * (y - yi) / (yj - yi) + xi) hit = !hit;
  }
  return hit;
};

for (const t of tiles) {
  const node = s => {
    const [x, y] = s.split(',').map(Number);
    return [(t.o[0] + x / 3 - OX) / STEP, (t.o[1] + y / 3 - OY) / STEP];
  };
  for (const line of t.walks.trim().split(/\n|\|/)) {
    const pts = line.trim().split(/\s+/).map(node).map(p => p.map(Math.round));
    for (let i = 1; i < pts.length; i++) {
      let [x, y] = pts[i - 1];
      const [tx, ty] = pts[i];
      while (x !== tx || y !== ty) {
        const nx = x + Math.sign(tx - x), ny = y + Math.sign(ty - y);
        edges.add(key(x, y, nx, ny));
        x = nx; y = ny;
      }
    }
  }
  for (const c of t.clusters.trim().split(/\n|\|/)) {
    const [p, outline] = c.split(':');
    const poly = outline.trim().split(/\s+/).map(node);
    const d = 1 - Math.pow(1 - Number(p), 1.75);
    for (let y = -101; y <= 0; y++) for (let x = -56; x <= 34; x++) {
      if (!inside(x + .5, y + .5, poly)) continue;
      if (rand() < d) edges.add(key(x, y, x + 1, y));
      if (rand() < d) edges.add(key(x, y, x, y + 1));
      if (rand() < d) edges.add(key(x, y, x + 1, y + 1));
      if (rand() < d) edges.add(key(x + 1, y, x, y + 1));
    }
  }
}

let d = '';
for (const e of edges) {
  const [a, b, c, f] = e.split(',').map(Number);
  d += `M${(OX + a * STEP).toFixed(1)} ${(OY + b * STEP).toFixed(1)}L${(OX + c * STEP).toFixed(1)} ${(OY + f * STEP).toFixed(1)}`;
}
NS('walk').setAttribute('d', d);
```
